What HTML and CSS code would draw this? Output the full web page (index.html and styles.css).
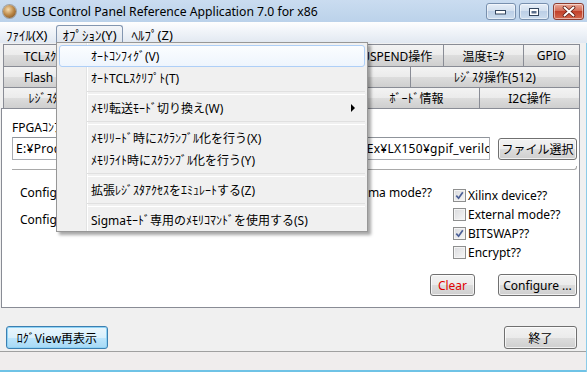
FILE: index.html
```html
<!DOCTYPE html>
<html lang="ja">
<head>
    <meta charset="UTF-8">
    <title>USB Control Panel Reference Application 7.0 for x86</title>
    <link rel="stylesheet" href="styles.css">
</head>
<body>
<div class="window">
    <div class="titlebar">
        <span class="app-icon"></span>
        <span class="title">USB Control Panel Reference Application 7.0 for x86</span>
        <div class="caption-buttons">
            <span class="cap-btn">
                <svg width="12" height="6" viewBox="0 0 12 6"><rect x="0.5" y="1.5" width="10" height="3.5" fill="#fff" stroke="#34465e"/></svg>
            </span>
            <span class="cap-btn">
                <svg width="12" height="10" viewBox="0 0 12 10"><rect x="1.5" y="1.5" width="9" height="7" fill="#fff" stroke="#34465e"/><rect x="3.5" y="4" width="5" height="2.5" fill="#5b6f8c"/></svg>
            </span>
            <span class="cap-btn close">
                <svg width="14" height="11" viewBox="0 0 14 11"><path d="M2.5 1.5 L11.5 9.5 M11.5 1.5 L2.5 9.5" stroke="#5a1a12" stroke-width="3.6" stroke-linecap="round"/><path d="M2.5 1.5 L11.5 9.5 M11.5 1.5 L2.5 9.5" stroke="#fff" stroke-width="2" stroke-linecap="round"/></svg>
            </span>
        </div>
    </div>

    <div class="menubar">
        <span class="menubar-item">ﾌｧｲﾙ(X)</span>
        <span class="menubar-item open">ｵﾌﾟｼｮﾝ(Y)</span>
        <span class="menubar-item">ﾍﾙﾌﾟ(Z)</span>
    </div>

    <div class="client">
        <div class="tab-rows">
            <div class="tab-row row1">
                <span class="tab">TCLｽｸﾘﾌﾟﾄ</span>
                <span class="tab">ﾒﾓﾘ転送</span>
                <span class="tab">EEPROM操作</span>
                <span class="tab">SUSPEND操作</span>
                <span class="tab">温度ﾓﾆﾀ</span>
                <span class="tab">GPIO</span>
            </div>
            <div class="tab-row row2">
                <span class="tab">Flash ROM操作</span>
                <span class="tab">ﾃﾞﾊﾞｯｸﾞ</span>
                <span class="tab">ｽﾄﾘｰﾑ転送ﾃｽﾄ</span>
                <span class="tab">ﾚｼﾞｽﾀ操作(512)</span>
            </div>
            <div class="tab-row row3">
                <span class="tab">ﾚｼﾞｽﾀ操作(256)</span>
                <span class="tab active">FPGAｺﾝﾌｨｸﾞ</span>
                <span class="tab">SPI操作</span>
                <span class="tab">ﾎﾞｰﾄﾞ情報</span>
                <span class="tab">I2C操作</span>
            </div>
        </div>

        <div class="tab-page">
            <div class="field-label">FPGAｺﾝﾌｨｸﾞﾚｰｼｮﾝﾌｧｲﾙ</div>
            <div class="file-row">
                <div class="textbox">E:¥Products¥USB_CP¥FPGA_Config¥Sample_Designs¥BoardEx¥LX150¥gpif_verilog¥top.bit</div>
                <button class="btn file-btn">ファイル選択</button>
            </div>
            <div class="group-end"></div>

            <div class="options">
                <div class="options-left">
                    <div class="opt-row">
                        <span>Configuration mode :</span>
                        <label class="check-label sigma"><span class="check"></span>Sigma mode??</label>
                    </div>
                    <div class="opt-row second">
                        <span>Configuration clock :</span>
                    </div>
                </div>
                <div class="options-right">
                    <label class="check-label"><span class="check on"><svg width="9" height="9" viewBox="0 0 9 9"><path d="M1.3 4.6 L3.6 7.2 L7.8 1.3" fill="none" stroke="#4a5f97" stroke-width="1.7"/></svg></span>Xilinx device??</label>
                    <label class="check-label"><span class="check"></span>External mode??</label>
                    <label class="check-label"><span class="check on"><svg width="9" height="9" viewBox="0 0 9 9"><path d="M1.3 4.6 L3.6 7.2 L7.8 1.3" fill="none" stroke="#4a5f97" stroke-width="1.7"/></svg></span>BITSWAP??</label>
                    <label class="check-label"><span class="check"></span>Encrypt??</label>
                </div>
            </div>

            <div class="actions">
                <button class="btn clear-btn">Clear</button>
                <button class="btn configure-btn">Configure ...</button>
            </div>
        </div>

        <div class="footer">
            <button class="btn log-btn">ﾛｸﾞView再表示</button>
            <button class="btn exit-btn">終了</button>
        </div>

        <div class="statusbar"></div>
    </div>

    <div class="dropdown">
        <div class="menu-entry hot">ｵｰﾄｺﾝﾌｨｸﾞ(V)</div>
        <div class="menu-entry">ｵｰﾄTCLｽｸﾘﾌﾟﾄ(T)</div>
        <div class="menu-sep"></div>
        <div class="menu-entry">ﾒﾓﾘ転送ﾓｰﾄﾞ切り換え(W)<span class="submenu-arrow"></span></div>
        <div class="menu-sep"></div>
        <div class="menu-entry">ﾒﾓﾘﾘｰﾄﾞ時にｽｸﾗﾝﾌﾞﾙ化を行う(X)</div>
        <div class="menu-entry">ﾒﾓﾘﾗｲﾄ時にｽｸﾗﾝﾌﾞﾙ化を行う(Y)</div>
        <div class="menu-sep"></div>
        <div class="menu-entry">拡張ﾚｼﾞｽﾀｱｸｾｽをｴﾐｭﾚｰﾄする(Z)</div>
        <div class="menu-sep"></div>
        <div class="menu-entry">Sigmaﾓｰﾄﾞ専用のﾒﾓﾘｺﾏﾝﾄﾞを使用する(S)</div>
    </div>
</div>
</body>
</html>
```

FILE: styles.css
```css
* {
    margin: 0;
    padding: 0;
    box-sizing: border-box;
}

body {
    width: 587px;
    height: 372px;
    overflow: hidden;
    background: #f0f0f0;
    font-family: "Noto Sans", "Noto Sans CJK JP", sans-serif;
    font-size: 12px;
    color: #000;
}

.window {
    position: relative;
    height: 372px;
    display: flex;
    flex-direction: column;
}

/* title bar */
.titlebar {
    height: 22px;
    flex: none;
    display: flex;
    align-items: center;
    padding: 0 3px;
    background: linear-gradient(#cadcf0, #bbd2ea);
}

.app-icon {
    width: 13px;
    height: 13px;
    border-radius: 50%;
    background: radial-gradient(circle at 40% 35%, #f6dcae, #b98544 50%, #6e4219);
    margin-right: 6px;
    box-shadow: 0 0 0 1px rgba(90, 60, 30, 0.35);
}

.title {
    flex: 1;
    font-size: 12.2px;
    white-space: nowrap;
}

.caption-buttons {
    display: flex;
    align-self: flex-start;
    margin-top: 3px;
}

.cap-btn {
    width: 30px;
    height: 17px;
    margin-left: 3px;
    border: 1px solid #7890ae;
    border-radius: 3px;
    display: flex;
    align-items: center;
    justify-content: center;
    background: linear-gradient(#e6eef8, #d3e0ef 45%, #bccfe6 50%, #cbdcee);
    box-shadow: inset 0 0 0 1px rgba(255, 255, 255, 0.5);
}

.cap-btn.close {
    width: 31px;
    margin-left: 4px;
    border-color: #8e3c30;
    background: linear-gradient(#eaa999, #d46d58 45%, #c2412b 50%, #d3684e);
}

/* menu bar */
.menubar {
    height: 21px;
    flex: none;
    display: flex;
    align-items: flex-end;
    font-size: 13px;
    background: linear-gradient(#fefefe, #f3f6fa 35%, #e1e8f1);
}

.menubar-item {
    height: 18px;
    padding: 0 5px;
    margin-right: 3px;
    display: flex;
    align-items: center;
    border: 1px solid transparent;
    border-bottom: none;
    white-space: nowrap;
}

.menubar-item.open {
    border-color: #8396b0;
    border-radius: 3px 3px 0 0;
    background: linear-gradient(#f4f6f9, #dfe5ed);
}

.client {
    flex: 1;
    display: flex;
    flex-direction: column;
    border-right: 1px solid #8ccbe8;
}

/* tabs */
.tab-rows {
    flex: none;
    padding: 1px 0 0 3px;
}

.tab-row {
    display: grid;
    width: 576px;
    height: 21px;
}

.tab-row.row1 {
    height: 22px;
    grid-template-columns: 97px 120px 123px 100px 80px 56px;
}

.tab-row.row2 {
    grid-template-columns: 125px 122px 160px 169px;
}

.tab-row.row3 {
    grid-template-columns: 132px 115px 103px 126px 100px;
}

.tab {
    margin-right: -1px;
    border: 1px solid #898c95;
    border-bottom: none;
    display: flex;
    align-items: center;
    justify-content: center;
    white-space: nowrap;
    overflow: hidden;
    background: linear-gradient(#f3f3f3, #ebebeb 50%, #dddddd 50%, #cfcfcf);
}

.tab.active {
    background: #fff;
}

/* tab page */
.tab-page {
    flex: none;
    width: 579px;
    height: 200px;
    margin-left: 1px;
    padding: 12px 2px 0 10px;
    border: 1px solid #898c95;
    background: #fff;
}

.field-label {
    line-height: 14px;
    white-space: nowrap;
}

.file-row {
    display: flex;
    align-items: flex-start;
    margin-top: 2px;
}

.textbox {
    width: 478px;
    height: 23px;
    padding: 0 3px;
    letter-spacing: 0.3px;
    line-height: 21px;
    border: 1px solid #abadb3;
    border-top-color: #8f949b;
    white-space: nowrap;
    overflow: hidden;
}

.group-end {
    width: 565px;
    height: 4px;
    margin-top: 6px;
    border-bottom: 1px solid #a9a9a9;
    border-right: 1px solid #a9a9a9;
    border-bottom-right-radius: 3px;
}

.options {
    display: flex;
    margin: 16px 0 0 8px;
}

.options-left {
    flex: 1;
}

.opt-row {
    display: flex;
    line-height: 14px;
    padding-right: 21px;
}

.opt-row.second {
    margin-top: 13px;
}

.options-right {
    width: 124px;
}

.check-label {
    height: 19px;
    display: flex;
    align-items: center;
    white-space: nowrap;
}

.check-label.sigma {
    height: 14px;
    margin-left: auto;
}

.check {
    width: 13px;
    height: 13px;
    margin-right: 2px;
    border: 1px solid #8e8f8f;
    display: flex;
    align-items: center;
    justify-content: center;
    background: linear-gradient(135deg, #d9dadd, #f7f7f7);
    box-shadow: inset 0 0 0 1px #f4f4f4;
}

.actions {
    display: flex;
    justify-content: flex-end;
    gap: 23px;
    margin-top: 12px;
}

/* buttons */
.btn {
    height: 22px;
    font: inherit;
    color: #000;
    border: 1px solid #707070;
    border-radius: 3px;
    background: linear-gradient(#f2f2f2, #ebebeb 50%, #dddddd 50%, #cfcfcf);
    box-shadow: inset 0 0 0 1px rgba(255, 255, 255, 0.7);
    white-space: nowrap;
}

.file-btn {
    width: 79px;
    margin: 1px 0 0 8px;
}

.clear-btn {
    width: 45px;
    color: #e00000;
}

.configure-btn {
    width: 79px;
}

.footer {
    flex: none;
    height: 43px;
    display: flex;
    justify-content: space-between;
    align-items: flex-start;
    padding: 18px 9px 0 6px;
}

.log-btn {
    width: 102px;
    height: 23px;
    border-color: #3c7fb1;
    background: linear-gradient(#eaf6fd, #d9f0fc 50%, #bee6fd 50%, #a7d9f5);
    box-shadow: inset 0 0 0 1px #8fd3f5;
}

.exit-btn {
    width: 73px;
    height: 23px;
}

.statusbar {
    flex: none;
    height: 21px;
    border-top: 1px solid #a0a0a0;
    border-bottom: 2px solid #6fc3e6;
    background: #f0eded;
}

/* open options menu */
.dropdown {
    position: absolute;
    top: 42px;
    left: 56px;
    width: 312px;
    padding: 2px 2px 0;
    border: 1px solid #979797;
    background: linear-gradient(to right, transparent 29px, #e2e3e3 29px, #e2e3e3 30px, #fff 30px, #fff 31px, transparent 31px), #f0f0f0;
    box-shadow: 3px 3px 3px rgba(0, 0, 0, 0.35);
}

.menu-entry {
    height: 22px;
    padding-left: 31px;
    display: flex;
    align-items: center;
    border: 1px solid transparent;
    border-radius: 3px;
    white-space: nowrap;
}

.menu-entry.hot {
    border-color: #aecff7;
    background: linear-gradient(#fbfdff, #eef5fd);
}

.menu-sep {
    height: 8px;
    margin-left: 28px;
    display: flex;
    align-items: center;
}

.menu-sep::after {
    content: "";
    flex: 1;
    height: 2px;
    border-top: 1px solid #e0e0e0;
    border-bottom: 1px solid #fff;
}

.submenu-arrow {
    margin-left: auto;
    margin-right: 9px;
    border-left: 4px solid #000;
    border-top: 4px solid transparent;
    border-bottom: 4px solid transparent;
}
```
